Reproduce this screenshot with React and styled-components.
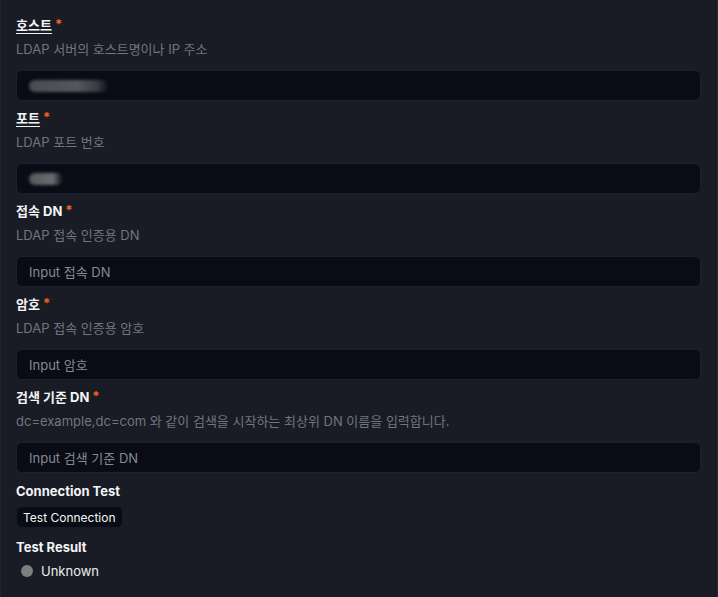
import React from "react";
import styled, { createGlobalStyle } from "styled-components";

const Global = createGlobalStyle`
  html, body { margin: 0; padding: 0; background: #191c24; }
  body { font-family: Inter, "Noto Sans CJK KR", sans-serif; -webkit-font-smoothing: antialiased; }
  * { box-sizing: border-box; }
`;

const Panel = styled.div`
  width: 718px;
  height: 597px;
  background: #191c24;
  border-left: 1px solid #1f2535;
  border-right: 1px solid #222a3a;
  padding: 14px 16px 0 15px;
  display: flex;
  flex-direction: column;
  overflow: hidden;
`;

const Field = styled.div`
  display: flex;
  flex-direction: column;
  margin-bottom: 6px;
`;

const Label = styled.div`
  display: flex;
  align-items: center;
  height: 20px;
  font-size: 13px;
  font-weight: 700;
  color: #f3f4f6;
  margin-bottom: ${(p) => p.$mb ?? 5}px;
`;

const LabelText = styled.span`
  text-decoration: ${(p) => (p.$underline ? "underline" : "none")};
  text-underline-offset: 3px;
  text-decoration-thickness: 1px;
`;

const Star = styled.span`
  color: #f2641f;
  margin-left: 3px;
`;

const Desc = styled.div`
  font-size: 13px;
  line-height: 20px;
  color: #70757f;
  margin-bottom: 11px;
`;

const InputBox = styled.div`
  height: 31px;
  border-radius: 6px;
  background: #090c14;
  border: 1px solid #1a2133;
  display: flex;
  align-items: center;
  padding: 0 12px;
  font-size: 13px;
  color: #858a93;
`;

const Redacted = styled.span`
  display: inline-block;
  height: 12px;
  border-radius: 6px;
  width: ${(p) => p.$w}px;
  background: ${(p) => p.$bg};
  filter: blur(1.5px);
`;

const Button = styled.button`
  align-self: flex-start;
  height: 22px;
  padding: 0 6px;
  border-radius: 6px;
  border: 1px solid #151b29;
  background: #090c14;
  color: #f3f4f6;
  font-family: inherit;
  font-size: 12px;
  margin-bottom: 9px;
`;

const Status = styled.div`
  display: flex;
  align-items: center;
  height: 20px;
  padding-left: 5px;
  font-size: 13px;
  color: #eceef1;
  gap: 8px;
`;

const Dot = styled.span`
  width: 12px;
  height: 12px;
  border-radius: 50%;
  background: #7e7e80;
`;

const Spacer = styled.div`
  height: ${(p) => p.$h}px;
`;

const fields = [
  { label: "호스트", underline: true, desc: "LDAP 서버의 호스트명이나 IP 주소", redact: { w: 80, bg: "linear-gradient(90deg,#4a4c52,#55575d 60%,#3b3d43 85%,rgba(40,42,48,0))" } },
  { label: "포트", underline: true, desc: "LDAP 포트 번호", redact: { w: 34, bg: "linear-gradient(90deg,#55575c,#6a6c70 70%,rgba(40,42,48,0))" } },
  { label: "접속 DN", desc: "LDAP 접속 인증용 DN", placeholder: "Input 접속 DN" },
  { label: "암호", desc: "LDAP 접속 인증용 암호", placeholder: "Input 암호" },
  { label: "검색 기준 DN", desc: "dc=example,dc=com 와 같이 검색을 시작하는 최상위 DN 이름을 입력합니다.", placeholder: "Input 검색 기준 DN" },
];

export default function App() {
  return (
    <>
      <Global />
      <Panel>
        {fields.map((f, i) => (
          <Field key={i}>
            <Label>
              <LabelText $underline={f.underline}>{f.label}</LabelText>
              <Star>*</Star>
            </Label>
            <Desc>{f.desc}</Desc>
            <InputBox>
              {f.redact ? <Redacted $w={f.redact.w} $bg={f.redact.bg} /> : f.placeholder}
            </InputBox>
          </Field>
        ))}
        <Spacer $h={2} />
        <Label>Connection Test</Label>
        <Button>Test Connection</Button>
        <Label $mb={4}>Test Result</Label>
        <Status>
          <Dot />
          Unknown
        </Status>
      </Panel>
    </>
  );
}
